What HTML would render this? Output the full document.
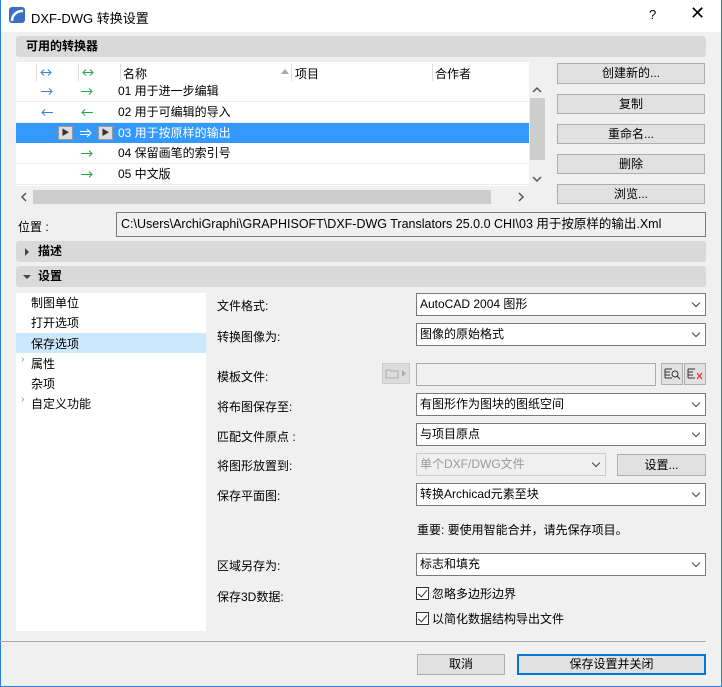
<!DOCTYPE html>
<html><head><meta charset="utf-8"><style>
*{box-sizing:border-box;margin:0;padding:0}
body{width:722px;height:687px;background:#f0f0f0;font-family:"Liberation Sans","Noto Sans CJK SC",sans-serif;font-size:12px;color:#000;position:relative;overflow:hidden}
.a{position:absolute}
.win{position:absolute;left:0;top:0;width:722px;height:687px;border:1px solid #2b7fd6;border-top:none}
.bar{position:absolute;left:16px;width:690px;height:21px;background:#d9d9d9;border-radius:3px;font-weight:bold;line-height:21px;padding-left:10px}
.btn{position:absolute;background:#e1e1e1;border:1px solid #adadad;text-align:center;line-height:18px}
.dd{position:absolute;background:#fff;border:1px solid #7a7a7a;height:23px;line-height:21px;padding-left:3px}
.dd:after{content:"";position:absolute;right:6px;top:6px;width:5px;height:5px;border-right:1px solid #444;border-bottom:1px solid #444;transform:rotate(45deg)}
.lbl{position:absolute;left:217px}
.row{position:absolute;left:16px;width:513px;height:21px;border-bottom:1px solid #ececec;line-height:20px}
.row span,.row svg{position:absolute}
.li{position:absolute;left:31px}
.cb{position:absolute;left:416px;width:13px;height:13px;border:1px solid #333;background:#fff}
.cb:after{content:"";position:absolute;left:3px;top:0;width:4px;height:8px;border-right:1.5px solid #333;border-bottom:1.5px solid #333;transform:rotate(40deg)}
</style></head><body>
<div class="a" style="left:0;top:0;width:722px;height:32px;background:#fff"></div>
<svg class="a" style="left:9px;top:7px" width="16" height="16"><rect width="16" height="16" rx="3" fill="#3a6fc4"/><path d="M3 14 A10 10 0 0 1 14 4" stroke="#fff" stroke-width="2.5" fill="none"/></svg>
<div class="a" style="left:31px;top:8px;font-size:13px">DXF-DWG 转换设置</div>
<div class="a" style="left:649px;top:7px;font-size:13px">?</div>
<div class="a" style="left:690px;top:3px;font-size:18px;font-weight:300">✕</div>
<div class="win"></div>

<div class="bar" style="top:36px">可用的转换器</div>
<div class="a" style="left:16px;top:62px;width:513px;height:124px;background:#fff"></div>
<div class="a" style="left:36px;top:64px;width:1px;height:17px;background:#ddd"></div>
<div class="a" style="left:78px;top:64px;width:1px;height:17px;background:#ddd"></div>
<div class="a" style="left:120px;top:64px;width:1px;height:17px;background:#ddd"></div>
<div class="a" style="left:291px;top:64px;width:1px;height:17px;background:#ddd"></div>
<div class="a" style="left:432px;top:64px;width:1px;height:17px;background:#ddd"></div>
<svg class="a" style="left:40px;top:68px" width="12" height="9"><path d="M1 4.5H11M4 1.5L1 4.5L4 7.5M8 1.5L11 4.5L8 7.5" stroke="#2e86de" fill="none"/></svg>
<svg class="a" style="left:82px;top:68px" width="12" height="9"><path d="M1 4.5H11M4 1.5L1 4.5L4 7.5M8 1.5L11 4.5L8 7.5" stroke="#1daa4a" fill="none"/></svg>
<div class="a" style="left:123px;top:65px">名称</div>
<div class="a" style="left:281px;top:69px;width:0;height:0;border-left:4px solid transparent;border-right:4px solid transparent;border-bottom:5px solid #aaa"></div>
<div class="a" style="left:295px;top:65px">项目</div>
<div class="a" style="left:435px;top:65px">合作者</div>
<div class="row" style="top:81px"><svg style="left:25px;top:6px" width="12" height="9"><path d="M0 4.5H11M8 1.5L11 4.5L8 7.5" stroke="#2e86de" fill="none"/></svg><svg style="left:65px;top:6px" width="12" height="9"><path d="M0 4.5H11M8 1.5L11 4.5L8 7.5" stroke="#1daa4a" fill="none"/></svg><span style="left:102px">01 用于进一步编辑</span></div>
<div class="row" style="top:102px"><svg style="left:25px;top:6px" width="12" height="9"><path d="M1 4.5H12M4 1.5L1 4.5L4 7.5" stroke="#2e86de" fill="none"/></svg><svg style="left:65px;top:6px" width="12" height="9"><path d="M1 4.5H12M4 1.5L1 4.5L4 7.5" stroke="#1daa4a" fill="none"/></svg><span style="left:102px">02 用于可编辑的导入</span></div>
<div class="row" style="top:123px;background:#3399ff;color:#fff;border:none;height:20px"><span style="left:42px;top:3px;width:15px;height:14px;background:#ddd;border:1px solid #999;color:#333;font-size:8px;line-height:12px;text-align:center">▶</span><svg style="left:64px;top:5px" width="13" height="10"><path d="M0 3.5H10M0 6.5H10M7 1L11 5L7 9" stroke="#fff" fill="none"/></svg><span style="left:82px;top:3px;width:15px;height:14px;background:#ddd;border:1px solid #999;color:#333;font-size:8px;line-height:12px;text-align:center">▶</span><span style="left:102px">03 用于按原样的输出</span></div>
<div class="row" style="top:143px"><svg style="left:65px;top:6px" width="12" height="9"><path d="M0 4.5H11M8 1.5L11 4.5L8 7.5" stroke="#1daa4a" fill="none"/></svg><span style="left:102px">04 保留画笔的索引号</span></div>
<div class="row" style="top:164px"><svg style="left:65px;top:6px" width="12" height="9"><path d="M0 4.5H11M8 1.5L11 4.5L8 7.5" stroke="#1daa4a" fill="none"/></svg><span style="left:102px">05 中文版</span></div>
<div class="a" style="left:530px;top:98px;width:15px;height:62px;background:#cdcdcd"></div>
<svg class="a" style="left:532px;top:86px" width="10" height="8"><path d="M1 6L5 2L9 6" stroke="#555" stroke-width="1.5" fill="none"/></svg>
<svg class="a" style="left:532px;top:175px" width="10" height="8"><path d="M1 2L5 6L9 2" stroke="#555" stroke-width="1.5" fill="none"/></svg>
<div class="a" style="left:33px;top:190px;width:458px;height:14px;background:#cdcdcd"></div>
<svg class="a" style="left:20px;top:192px" width="8" height="10"><path d="M6 1L2 5L6 9" stroke="#555" stroke-width="1.5" fill="none"/></svg>
<svg class="a" style="left:517px;top:192px" width="8" height="10"><path d="M2 1L6 5L2 9" stroke="#555" stroke-width="1.5" fill="none"/></svg>
<div class="btn" style="left:557px;top:63px;width:148px;height:21px">创建新的...</div>
<div class="btn" style="left:557px;top:94px;width:148px;height:20px">复制</div>
<div class="btn" style="left:557px;top:124px;width:148px;height:20px">重命名...</div>
<div class="btn" style="left:557px;top:154px;width:148px;height:20px">删除</div>
<div class="btn" style="left:557px;top:184px;width:148px;height:20px">浏览...</div>
<div class="a" style="left:18px;top:218px">位置 :</div>
<div class="a" style="left:116px;top:212px;width:590px;height:25px;border:1px solid #7a7a7a;background:#f0f0f0;line-height:23px;padding-left:4px;font-size:12.5px;white-space:nowrap">C:\Users\ArchiGraphi\GRAPHISOFT\DXF-DWG Translators 25.0.0 CHI\03 用于按原样的输出.Xml</div>

<div class="bar" style="top:241px;padding-left:22px">描述</div>
<div class="a" style="left:25px;top:248px;border-top:4px solid transparent;border-bottom:4px solid transparent;border-left:4px solid #444"></div>
<div class="bar" style="top:266px;padding-left:22px">设置</div>
<div class="a" style="left:23px;top:275px;border-left:4px solid transparent;border-right:4px solid transparent;border-top:4px solid #444"></div>

<div class="a" style="left:16px;top:293px;width:190px;height:338px;background:#fff"></div>
<div class="a" style="left:16px;top:333px;width:190px;height:20px;background:#cce8ff"></div>
<div class="li" style="top:294px">制图单位</div>
<div class="li" style="top:314px">打开选项</div>
<div class="li" style="top:335px">保存选项</div>
<div class="li" style="top:355px">属性</div><div class="a" style="left:21px;top:354px;color:#888;font-size:10px">›</div>
<div class="li" style="top:375px">杂项</div>
<div class="li" style="top:395px">自定义功能</div><div class="a" style="left:21px;top:394px;color:#888;font-size:10px">›</div>

<div class="lbl" style="top:297px">文件格式:</div>
<div class="lbl" style="top:328px">转换图像为:</div>
<div class="lbl" style="top:368px">模板文件:</div>
<div class="lbl" style="top:398px">将布图保存至:</div>
<div class="lbl" style="top:428px">匹配文件原点 :</div>
<div class="lbl" style="top:457px">将图形放置到:</div>
<div class="lbl" style="top:487px">保存平面图:</div>
<div class="lbl" style="top:557px">区域另存为:</div>
<div class="lbl" style="top:588px">保存3D数据:</div>

<div class="dd" style="left:416px;top:293px;width:290px">AutoCAD 2004 图形</div>
<div class="dd" style="left:416px;top:323px;width:290px">图像的原始格式</div>
<div class="a" style="left:382px;top:363px;width:28px;height:21px;background:#ddd;border:1px solid #ccc"></div>
<svg class="a" style="left:385px;top:367px" width="24" height="13"><path d="M1 3H5L6 4H13V11H1Z" stroke="#aaa" fill="none"/><path d="M17 3L21 6.5L17 10Z" fill="#aaa"/></svg>
<div class="a" style="left:416px;top:363px;width:240px;height:23px;border:1px solid #aaa;background:#f0f0f0"></div>
<div class="a" style="left:661px;top:363px;width:22px;height:22px;border:1px solid #adadad;background:#e1e1e1"></div>
<svg class="a" style="left:664px;top:367px" width="18" height="14"><path d="M1 2H8M1 5H6M1 8H6M1 11H8M1 2V11" stroke="#333" fill="none"/><circle cx="11" cy="7" r="3" stroke="#333" fill="none"/><path d="M13 9L16 12" stroke="#333"/></svg>
<div class="a" style="left:684px;top:363px;width:22px;height:22px;border:1px solid #adadad;background:#e1e1e1"></div>
<svg class="a" style="left:687px;top:367px" width="18" height="14"><path d="M1 2H8M1 5H6M1 8H6M1 11H8M1 2V11" stroke="#333" fill="none"/><path d="M10 6L15 12M15 6L10 12" stroke="#e33" stroke-width="1.3"/></svg>
<div class="dd" style="left:416px;top:393px;width:290px">有图形作为图块的图纸空间</div>
<div class="dd" style="left:416px;top:423px;width:290px">与项目原点</div>
<div class="dd" style="left:416px;top:453px;width:190px;background:#f0f0f0;border-color:#ccc;color:#999">单个DXF/DWG文件</div>
<div class="btn" style="left:617px;top:454px;width:89px;height:22px;line-height:20px">设置...</div>
<div class="dd" style="left:416px;top:483px;width:290px">转换Archicad元素至块</div>
<div class="a" style="left:417px;top:521px">重要: 要使用智能合并，请先保存项目。</div>
<div class="dd" style="left:416px;top:553px;width:290px">标志和填充</div>
<div class="cb" style="top:587px"></div><div class="a" style="left:432px;top:585px">忽略多边形边界</div>
<div class="cb" style="top:612px"></div><div class="a" style="left:432px;top:610px">以简化数据结构导出文件</div>

<div class="a" style="left:0;top:641px;width:706px;height:1px;background:#aaa"></div>
<div class="btn" style="left:417px;top:654px;width:88px;height:21px">取消</div>
<div class="btn" style="left:517px;top:654px;width:189px;height:21px;border:2px solid #0078d7;line-height:17px">保存设置并关闭</div>
</body></html>
